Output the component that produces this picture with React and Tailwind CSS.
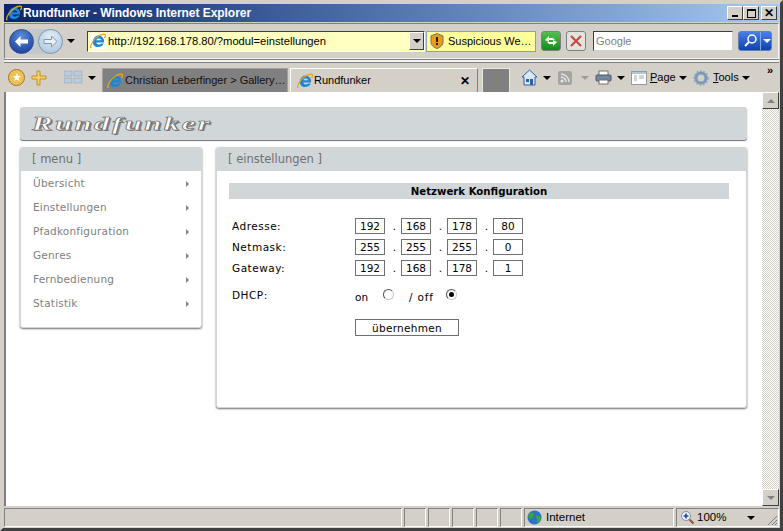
import React from 'react';

const IeIcon = ({ size = 16 }) => (
  <svg width={size} height={size} viewBox="0 0 16 16" className="shrink-0">
    <path d="M8 2.500a5.800 5.800 0 0 1 6 7H6.300c.3 2.200 3.400 2.600 5 1h2.500C12 14.500 6.500 15 4 12.500 1 9 4 2.800 8 2.500zM6.300 7.300h5C11 4.800 6.800 4.800 6.300 7.300z" fill="#1c86d8" fillRule="evenodd" />
    <path d="M1 15.300C-.5 12.500 4 5.500 9 2.800c3-1.600 6-2.300 6.500-.8.300 1-.5 2.200-1.200 3" fill="none" stroke="#eea414" strokeWidth="1.300" />
  </svg>
);

const Arrow = ({ color = 'border-t-black', className = '' }) => (
  <span className={`inline-block shrink-0 w-0 h-0 border-x-[4px] border-x-transparent border-t-[4px] ${color} ${className}`} />
);

const NavButton = ({ dir, active }) => (
  <div className={`w-[25px] h-[25px] rounded-full border flex items-center justify-center ${active ? 'bg-[radial-gradient(circle_at_50%_30%,#5b8fe0,#10328c)] border-[#32508c]' : 'bg-[radial-gradient(circle_at_50%_30%,#e4eef6,#a4c0d8)] border-[#7c98b0]'}`}>
    <svg width="15" height="13" viewBox="0 0 15 13">
      {dir === 'back' ? (
        <path d="M1 6.500 6.500 1v3.500H14v4H6.500V12z" fill="#fff" />
      ) : (
        <path d="M14 6.500 8.500 1v3.500H1v4h7.500V12z" fill="#e8f0f6" stroke="#7c98b0" />
      )}
    </svg>
  </div>
);

const Sunken = ({ className = '', children }) => (
  <div className={`border border-t-[#808080] border-l-[#808080] border-r-white border-b-white ${className}`}>{children}</div>
);

const IpRow = ({ label, parts }) => (
  <div className="flex items-center h-[21px]">
    <span className="w-[126px] pl-[3px] pt-[2px] text-black tracking-[0.5px]">{label}</span>
    {parts.map((p, i) => (
      <React.Fragment key={i}>
        <span className="w-[30px] h-[16px] border border-[#707070] text-center leading-[14px] text-black">{p}</span>
        {i < 3 && <span className="w-[16px] pl-[3px] text-center text-black pt-[2px]">.</span>}
      </React.Fragment>
    ))}
  </div>
);

const Radio = ({ checked }) => (
  <span className="relative top-[-2px] w-[11px] h-[11px] rounded-full bg-white border border-[#505050] border-r-[#c8c8c8] border-b-[#c8c8c8] flex items-center justify-center">
    {checked && <span className="w-[5px] h-[5px] rounded-full bg-black" />}
  </span>
);

const menu = ['Übersicht', 'Einstellungen', 'Pfadkonfiguration', 'Genres', 'Fernbedienung', 'Statistik'];

export default function App() {
  return (
    <div className="w-[783px] h-[531px] overflow-hidden flex flex-col bg-[#d4d0c8] border-[3px] border-r-[#404040] border-b-[#404040] border-t-[#d4d0c8] border-l-[#d4d0c8] px-px pt-px text-[11px] font-['Liberation_Sans',sans-serif] text-black">
      {/* Title bar */}
      <div className="h-[18px] shrink-0 flex items-center pl-[2px] pr-[2px] bg-gradient-to-r from-[#0a246a] to-[#a6caf0]">
        <IeIcon />
        <span className="ml-[1px] text-white font-bold text-[12px] tracking-[-0.05px] leading-none">Rundfunker - Windows Internet Explorer</span>
        <div className="ml-auto flex">
          {[
            <span key="a" className="w-[6px] h-[2px] bg-black mt-[6px]" />,
            <span key="b" className="w-[9px] h-[9px] border border-black border-t-2" />,
            <span key="c" className="text-[12px] leading-none font-bold">✕</span>,
          ].map((g, i) => (
            <div key={i} className={`w-[16px] h-[14px] bg-[#d4d0c8] border border-t-white border-l-white border-r-[#404040] border-b-[#404040] flex items-center justify-center ${i === 2 ? 'ml-[2px]' : ''}`}>{g}</div>
          ))}
        </div>
      </div>

      {/* Address toolbar */}
      <div className="h-[36px] shrink-0 mt-[1px] flex items-center border border-[#f4f2ee] border-t-[#808080] border-l-[#808080] pl-[4px] pr-[6px]">
        <div className="flex items-center rounded-full bg-[#c4c8cc]">
          <NavButton dir="back" active />
          <div className="ml-[4px]"><NavButton dir="forward" /></div>
        </div>
        <Arrow className="ml-[4px]" />
        <div className="ml-[12px] w-[338px] h-[21px] flex items-center bg-[#ffffc0] border border-t-[#404040] border-l-[#404040] border-r-white border-b-white">
          <span className="mx-[2px] bg-white"><IeIcon /></span>
          <span className="flex-1 truncate text-[11.2px]">http://192.168.178.80/?modul=einstellungen</span>
          <div className="w-[15px] h-[18px] bg-[#d4d0c8] border border-t-white border-l-white border-r-[#404040] border-b-[#404040] flex items-center justify-center"><Arrow /></div>
        </div>
        <div className="ml-[1px] w-[110px] h-[21px] flex items-center bg-[#ffff9c] border border-[#8ca0b4]">
          <svg width="14" height="16" viewBox="0 0 14 16" className="ml-[3px] shrink-0">
            <path d="M7 .5 13 3v6c0 3.500-3 5.500-6 6.500C4 14.500 1 12.500 1 9V3z" fill="#e89c14" stroke="#707070" />
            <rect x="6" y="4" width="2" height="5" fill="#301800" />
            <rect x="6" y="10" width="2" height="2" fill="#301800" />
          </svg>
          <span className="ml-[4px] whitespace-nowrap">Suspicious We…</span>
        </div>
        <div className="ml-[5px] w-[20px] h-[20px] rounded-[3px] border border-[#808080] bg-gradient-to-b from-[#50c050] to-[#108c18] flex items-center justify-center">
          <svg width="14" height="14" viewBox="0 0 14 14">
            <path d="M1 6 5 2v2h4l2 2H5v2zM13 8l-4 4v-2H5L3 8h6V6z" fill="#fff" />
          </svg>
        </div>
        <div className="ml-[5px] w-[20px] h-[20px] rounded-[3px] border border-[#808080] bg-[#e4e2dc] flex items-center justify-center">
          <svg width="14" height="14" viewBox="0 0 14 14">
            <path d="M2 2l10 10M12 2 2 12" stroke="#c84848" strokeWidth="2.200" />
          </svg>
        </div>
        <div className="ml-[7px] w-[140px] h-[20px] bg-white border border-t-[#404040] border-l-[#404040] border-r-[#d4d0c8] border-b-[#d4d0c8] pl-[2px] leading-[18px] text-[#808080]">Google</div>
        <div className="ml-[5px] w-[34px] h-[20px] rounded-[3px] border border-[#6080b8] bg-gradient-to-b from-[#4880e8] to-[#1040b0] flex items-center">
          <svg width="21" height="16" viewBox="0 0 21 16">
            <circle cx="13" cy="6" r="4" fill="none" stroke="#fff" strokeWidth="1.500" />
            <path d="M10 9 6 13" stroke="#fff" strokeWidth="2" />
          </svg>
          <span className="h-full flex items-center pl-[2px] border-l border-l-[#80a8e8]">
            <Arrow color="border-t-white" />
          </span>
        </div>
      </div>

      {/* Separator */}
      <div className="h-[4px] shrink-0 border-y border-[#808080] bg-[#f4f2ee]" />

      {/* Tab and command row */}
      <div className="h-[29px] shrink-0 flex items-end pl-[3px] relative">
        <div className="flex items-center h-[29px] w-[95px] shrink-0">
          <span className="ml-[1px] w-[17px] h-[17px] rounded-full bg-[#f0c050] border border-[#a07830] flex items-center justify-center text-white text-[11px] leading-none">★</span>
          <svg width="16" height="16" viewBox="0 0 16 16" className="ml-[6px]">
            <path d="M6 1h3v5h6v3H9v6H6V9H1V6h5z" fill="#f8d060" stroke="#c09030" />
          </svg>
          <svg width="19" height="15" viewBox="0 0 19 15" className="ml-[17px]">
            <rect x="0" y="1" width="8" height="5" fill="#b8cce0" stroke="#8c9cb0" strokeWidth=".5" />
            <rect x="10" y="1" width="8" height="5" fill="#b8cce0" stroke="#8c9cb0" strokeWidth=".5" />
            <rect x="0" y="8" width="8" height="5" fill="#b8cce0" stroke="#8c9cb0" strokeWidth=".5" />
            <rect x="10" y="8" width="8" height="5" fill="#b8cce0" stroke="#8c9cb0" strokeWidth=".5" />
          </svg>
          <Arrow className="ml-[5px]" />
        </div>
        <div className="w-[186px] h-[24px] shrink-0 bg-[#808080] border border-[#a0a0a0] border-b-0 flex items-center pl-[4px] gap-[2px]">
          <IeIcon />
          <span className="whitespace-nowrap text-[#101010]">Christian Leberfinger &gt; Gallery…</span>
        </div>
        <div className="ml-[2px] w-[188px] h-[24px] shrink-0 border-l border-r border-t border-l-white border-r-[#808080] border-t-white flex items-center pl-[6px] gap-[1px]">
          <IeIcon />
          <span>Rundfunker</span>
          <span className="ml-auto mr-[7px] text-[12px] font-bold leading-none">✕</span>
        </div>
        <div className="ml-[4px] w-[28px] h-[24px] shrink-0 bg-[#808080] border border-[#e8e8e8] border-b-0" />

        {/* Command bar */}
        <div className="ml-[11px] h-[29px] flex items-center shrink-0">
          <svg width="17" height="17" viewBox="0 0 17 17">
            <path d="M8.500 1 16 8h-2v8H3V8H1z" fill="#d8e8f4" stroke="#3060a8" />
            <rect x="9" y="10" width="3" height="6" fill="#3060a8" />
            <rect x="5" y="10" width="3" height="3" fill="#3060a8" />
          </svg>
          <Arrow className="ml-[5px]" />
          <svg width="14" height="14" viewBox="0 0 14 14" className="ml-[7px]">
            <rect width="14" height="14" rx="2" fill="#a4a4a0" />
            <circle cx="4" cy="10" r="1.500" fill="#e8e8e4" />
            <path d="M3 6a5 5 0 0 1 5 5M3 3a8 8 0 0 1 8 8" fill="none" stroke="#e8e8e4" strokeWidth="1.300" />
          </svg>
          <Arrow color="border-t-[#9c9c98]" className="ml-[9px]" />
          <svg width="17" height="15" viewBox="0 0 17 15" className="ml-[6px]">
            <rect x="4" y="1" width="9" height="5" fill="#fff" stroke="#707070" />
            <rect x="1" y="5" width="15" height="6" rx="1" fill="#7088a0" stroke="#505860" />
            <rect x="4" y="10" width="9" height="4" fill="#fff" stroke="#707070" />
          </svg>
          <Arrow className="ml-[5px]" />
          <svg width="16" height="14" viewBox="0 0 16 14" className="ml-[6px]">
            <rect x=".5" y=".5" width="15" height="13" fill="#fff" stroke="#8c9cac" />
            <rect x="1" y="1" width="14" height="2" fill="#b8c4d0" />
            <path d="M3 5h3M3 7h3M3 9h3M8 5h5M8 7h5" stroke="#a0a8b0" />
          </svg>
          <span className="ml-[3px] w-[25px]"><u>P</u>age</span>
          <Arrow className="ml-[4px]" />
          <svg width="16" height="16" viewBox="0 0 16 16" className="ml-[6px]">
            <circle cx="8" cy="8" r="5" fill="none" stroke="#7c98b8" strokeWidth="3" />
            <circle cx="8" cy="8" r="7" fill="none" stroke="#90a8c4" strokeWidth="1.500" strokeDasharray="2 1.500" />
          </svg>
          <span className="ml-[4px] w-[25px]"><u>T</u>ools</span>
          <Arrow className="ml-[4px]" />
          <span className="ml-[17px] mb-[14px] text-[11px] font-bold leading-none">»</span>
        </div>
      </div>

      {/* Page viewport */}
      <div className="h-[414px] shrink-0 flex bg-white border-l-[2px] border-l-[#808080] font-['DejaVu_Sans',sans-serif] text-[10.500px] text-[#808080]">
        <div className="flex-1 pl-[14px] pr-[14px] pt-[15px]">
          <div className="h-[33px] w-[727px] rounded-[3px] bg-[#d1d6d9] shadow-[0_1px_1px_#707070] flex items-center pl-[12px]">
            <span className="inline-block origin-left scale-x-[1.7] font-['Liberation_Serif',serif] italic font-bold text-[18px] leading-none tracking-[1.500px] text-white [-webkit-text-stroke:0.5px_#606060] [text-shadow:1px_1px_0_#808080]">Rundfunker</span>
          </div>
          <div className="mt-[7px] flex items-start gap-[14px]">
            {/* Menu */}
            <div className="w-[182px] h-[181px] shrink-0 rounded-[3px] bg-white border border-[#d1d6d9] border-t-0 shadow-[0_1px_2px_#707070] overflow-hidden">
              <div className="h-[24px] bg-[#d1d6d9] pl-[11px] leading-[24px] text-[11.500px] text-[#707070]">[ menu ]</div>
              <ul className="mt-[1px]">
                {menu.map((m) => (
                  <li key={m} className="h-[24px] flex items-center pl-[12px] pr-[12px] justify-between tracking-[0.2px]">
                    <span>{m}</span>
                    <span className="w-0 h-0 border-y-[3px] border-y-transparent border-l-[3px] border-l-[#808080]" />
                  </li>
                ))}
              </ul>
            </div>

            {/* Main panel */}
            <div className="w-[531px] h-[261px] shrink-0 rounded-[3px] bg-white border border-[#d1d6d9] border-t-0 shadow-[0_1px_2px_#707070] overflow-hidden">
              <div className="h-[24px] bg-[#d1d6d9] pl-[11px] leading-[24px] text-[11.500px] text-[#707070]">[ einstellungen ]</div>
              <div className="pl-[12px] pt-[12px]">
                <div className="w-[500px] h-[16px] bg-[#d1d6d9] text-center leading-[17px] text-[10.200px] font-bold text-black">Netzwerk Konfiguration</div>
                <div className="mt-[16px]">
                  <IpRow label="Adresse:" parts={['192', '168', '178', '80']} />
                  <IpRow label="Netmask:" parts={['255', '255', '255', '0']} />
                  <IpRow label="Gateway:" parts={['192', '168', '178', '1']} />
                </div>
                <div className="mt-[8px] flex items-center h-[21px] text-black">
                  <span className="w-[126px] pl-[3px] pb-[2px] tracking-[0.5px]">DHCP:</span>
                  <span className="pt-[3px]">on</span>
                  <span className="ml-[15px]"><Radio /></span>
                  <span className="ml-[15px] pt-[3px] tracking-[0.8px]">/ off</span>
                  <span className="ml-[12px]"><Radio checked /></span>
                </div>
                <button className="block ml-[126px] mt-[12px] w-[104px] h-[17px] border border-[#707070] bg-white text-center leading-[14px] text-black tracking-[0.3px]">übernehmen</button>
              </div>
            </div>
          </div>
        </div>

        {/* Scrollbar */}
        <div className="w-[17px] shrink-0 flex flex-col bg-[#eeecE8]">
          <div className="h-[17px] bg-[#d4d0c8] border border-t-white border-l-white border-r-[#404040] border-b-[#404040] flex items-center justify-center">
            <span className="w-0 h-0 border-x-[4px] border-x-transparent border-b-[4px] border-b-[#808080]" />
          </div>
          <div className="flex-1 bg-[repeating-conic-gradient(#d4d0c8_0_25%,#ffffff_0_50%)] bg-[length:2px_2px]" />
          <div className="h-[17px] bg-[#d4d0c8] border border-t-white border-l-white border-r-[#404040] border-b-[#404040] flex items-center justify-center">
            <span className="w-0 h-0 border-x-[4px] border-x-transparent border-t-[4px] border-t-[#808080]" />
          </div>
        </div>
      </div>

      {/* Status bar */}
      <div className="mt-[2px] h-[19px] shrink-0 flex items-stretch gap-[2px] text-[11.500px]">
        <Sunken className="w-[398px] shrink-0" />
        {[0, 1, 2, 3, 4].map((i) => (
          <Sunken key={i} className="w-[22px] shrink-0" />
        ))}
        <Sunken className="w-[150px] shrink-0 flex items-center pl-[2px] gap-[4px]">
          <svg width="15" height="15" viewBox="0 0 15 15">
            <circle cx="7.500" cy="7.500" r="7" fill="#2c70c8" />
            <path d="M3 3c2-1 4 0 4 2S5 7 4 9 1 7 1 6zM9 6c2-1 4 0 5 2 0 3-2 5-4 5-1-2 1-3 0-4S8 7 9 6z" fill="#38a838" />
          </svg>
          <span>Internet</span>
        </Sunken>
        <Sunken className="flex-1 flex items-center pl-[3px] relative">
          <svg width="15" height="15" viewBox="0 0 15 15">
            <circle cx="6" cy="6" r="4.500" fill="#f0f4fa" stroke="#7890b0" />
            <path d="M6 3.500v5M3.500 6h5" stroke="#1848b0" strokeWidth="1.600" />
            <path d="M9.500 9.500l4 4" stroke="#905828" strokeWidth="2" />
          </svg>
          <span className="ml-[2px]">100%</span>
          <Arrow className="ml-[21px]" />
          <svg width="12" height="12" viewBox="0 0 12 12" className="absolute right-0 bottom-0">
            <path d="M11 2 2 11M11 6l-5 5M11 9l-2 2" stroke="#808080" />
          </svg>
        </Sunken>
      </div>
    </div>
  );
}
